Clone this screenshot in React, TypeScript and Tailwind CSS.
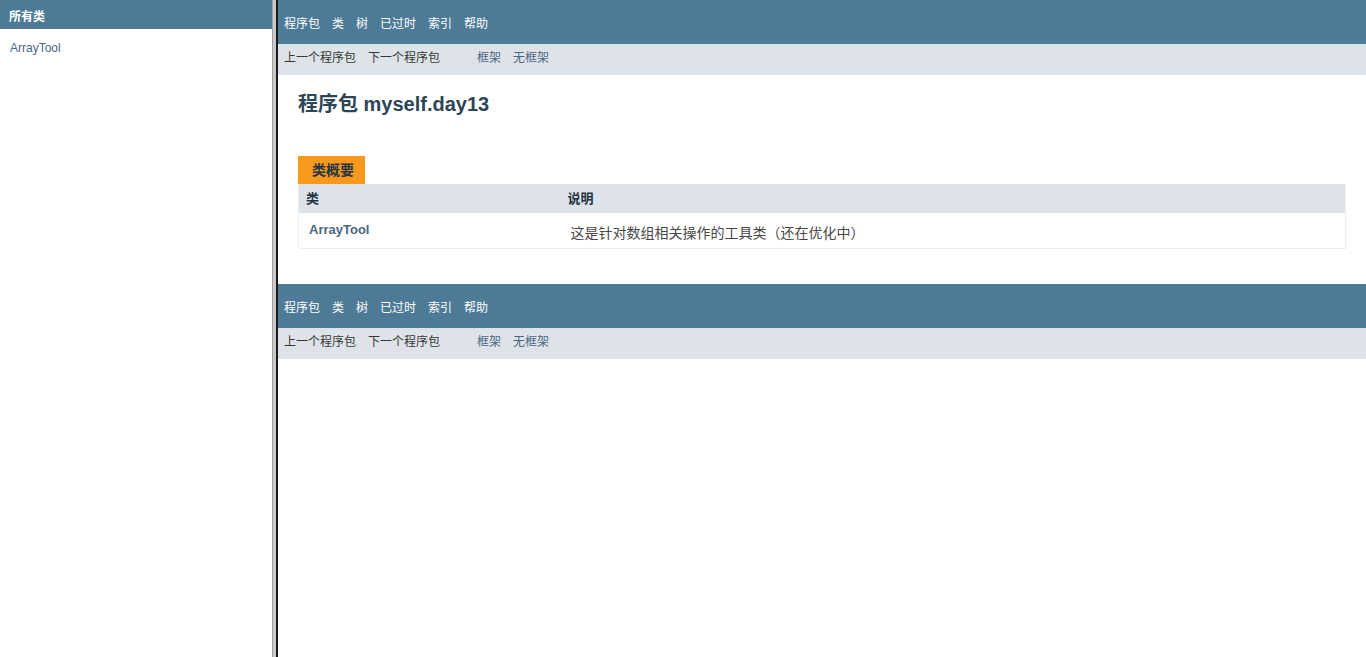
const font = { fontFamily: '"Liberation Sans", Arial, "Noto Sans CJK SC", sans-serif' };

function TopNav() {
  const items = ['程序包', '类', '树', '已过时', '索引', '帮助'];
  return (
    <div className="bg-[#4d7a97] h-[44px] flex items-center pl-[6px] pt-[3px] text-[12px] text-white">
      <ul className="flex gap-[12px]">
        {items.map((t) => (
          <li key={t}>{t}</li>
        ))}
      </ul>
    </div>
  );
}

function SubNav() {
  return (
    <div className="bg-[#dee3e9] h-[31px] flex items-center pl-[6px] pb-[3px] text-[12px]">
      <ul className="flex gap-[12px] text-[#353833]">
        <li>上一个程序包</li>
        <li>下一个程序包</li>
      </ul>
      <ul className="flex gap-[12px] text-[#4a6782] ml-[37px]">
        <li>框架</li>
        <li>无框架</li>
      </ul>
    </div>
  );
}

export default function App() {
  return (
    <div className="flex h-screen w-full bg-white overflow-hidden" style={font}>
      <div className="w-[272px] shrink-0 bg-white">
        <div className="bg-[#4d7a97] h-[29px] flex items-center pl-[9px] pt-[4px] text-[12px] font-bold text-white">
          所有类
        </div>
        <div className="pl-[10px] pt-[10px] text-[12px] text-[#4a6782]">ArrayTool</div>
      </div>
      <div className="w-[4px] shrink-0 bg-[#c8c8c8] border-l border-[#a0a0a0]" />
      <div className="w-[2px] shrink-0 bg-[#1a1a1a]" />
      <div className="flex-1 min-w-0">
        <TopNav />
        <SubNav />
        <div className="px-[20px] pt-[15px] pb-[35px]">
          <h1 className="h-[28px] flex items-center text-[20px] font-bold text-[#2c4557]">
            程序包 myself.day13
          </h1>
          <div className="mt-[38px]">
            <div className="inline-flex h-[28px] items-center bg-[#f8981d] pl-[14px] pr-[11px] text-[14px] font-bold text-[#253441]">
              类概要
            </div>
            <div className="border border-t-0 border-[#eeeeee]">
              <div className="flex h-[29px] items-center bg-[#dee3e9] text-[13px] font-bold text-[#253441]">
                <div className="w-1/4 pl-[7px]">类</div>
                <div className="flex-1 pl-[7px]">说明</div>
              </div>
              <div className="flex h-[35px] text-[#474747]">
                <div className="w-1/4 pl-[10px] pt-[7px] text-[13px] font-bold text-[#4a6782]">ArrayTool</div>
                <div className="flex-1 pl-[10px] pt-[10px] text-[14px]">这是针对数组相关操作的工具类（还在优化中）</div>
              </div>
            </div>
          </div>
        </div>
        <TopNav />
        <SubNav />
      </div>
    </div>
  );
}
